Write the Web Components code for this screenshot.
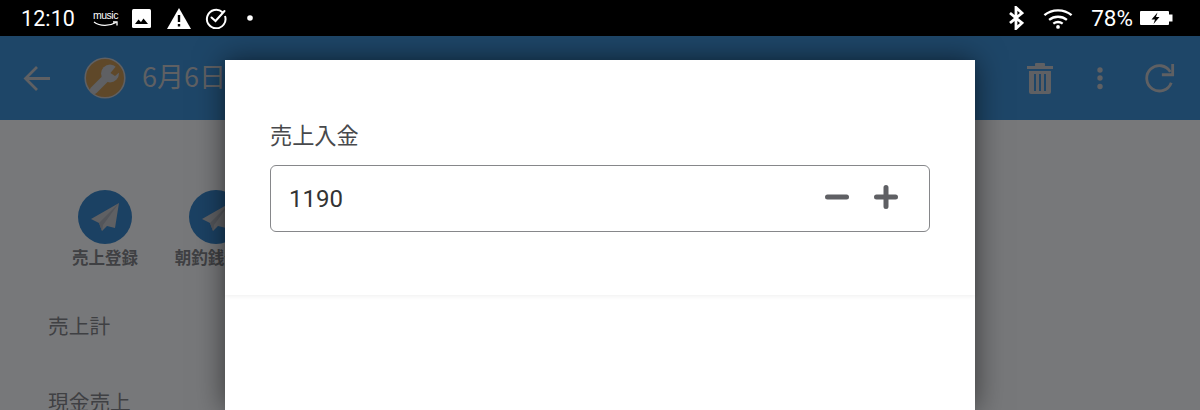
<!DOCTYPE html>
<html lang="ja">
<head>
<meta charset="utf-8">
<title>売上入金</title>
<style>
    html, body {
        margin: 0;
        width: 1200px;
        height: 410px;
        overflow: hidden;
        background: #77787a;
        font-family: "Noto Sans CJK JP", "Noto Sans", sans-serif;
    }
    body {
        display: flex;
        flex-direction: column;
        position: relative;
    }
</style>
</head>
<body>
<status-bar></status-bar>
<app-toolbar title="6月6日"></app-toolbar>
<sales-page>
    <quick-action>売上登録</quick-action>
    <quick-action>朝釣銭登録</quick-action>
</sales-page>
<amount-dialog label="売上入金" value="1190"></amount-dialog>

<script>
class StatusBar extends HTMLElement {
    constructor() {
        super();
        this.shadowDOM = this.attachShadow({mode:"open"});
    }

    connectedCallback() {
        this.shadowDOM.innerHTML = `
        <style>
            :host {
                display: flex;
                align-items: center;
                height: 36px;
                flex: none;
                background: #000;
                color: #fff;
                font-family: Roboto, sans-serif;
                font-size: 21.500px;
            }
            .left, .right { display: flex; align-items: center; }
            .left { padding-left: 21px; }
            .right { margin-left: auto; padding-right: 27px; }
            svg { display: block; flex: none; }
            .time { width: 72px; letter-spacing: .1px; }
            .music { position: relative; width: 26px; height: 24px; margin-right: 13px; }
            .music span {
                position: absolute;
                left: 0; top: 3px;
                font: 10.500px "Liberation Sans", sans-serif;
                letter-spacing: -.5px;
            }
            .music svg { position: absolute; left: 0; top: 0; }
            .level { font-size: 22.500px; margin-right: 7px; }
        </style>
        <div class="left">
            <span class="time">12:10</span>
            <div class="music">
                <span>music</span>
                <svg width="26" height="24" viewBox="0 0 26 24" fill="none" stroke="#fff" stroke-width="1.300">
                    <path d="M1 16C7 20.500 16 20.500 23 16.500"/>
                    <path d="M20 16h4v3.500"/>
                </svg>
            </div>
            <svg width="19" height="19" viewBox="0 0 19 19" style="margin-right:16px">
                <rect width="19" height="19" rx="1.500" fill="#fff"/>
                <path d="M3 15l3.500-4.500 2.500 2.500 2.500-3.500 4.500 5.500z" fill="#000"/>
            </svg>
            <svg width="24" height="21" viewBox="0 0 24 21" style="margin-right:14px">
                <path d="M12 0L24 21H0z" fill="#fff"/>
                <rect x="10.800" y="7" width="2.400" height="7" fill="#000"/>
                <rect x="10.800" y="16" width="2.400" height="2.500" fill="#000"/>
            </svg>
            <svg width="22" height="22" viewBox="0 0 22 22" fill="none" stroke="#fff" stroke-width="2" style="margin-right:20px">
                <path d="M17.500 5.200A9.300 9.300 0 1 0 20 9"/>
                <path d="M6.500 10.500l4 3.500 9-10" stroke-linecap="round"/>
            </svg>
            <svg width="6" height="6" viewBox="0 0 6 6"><circle cx="3" cy="3" r="2.800" fill="#fff"/></svg>
        </div>
        <div class="right">
            <svg width="16" height="24" viewBox="0 0 16 24" fill="none" stroke="#fff" stroke-width="2.800" style="margin-right:19px">
                <path d="M2 7l12 10-6 5.500V1.500L14 7 2 17"/>
            </svg>
            <svg width="30" height="21" viewBox="0 0 32 22" fill="none" stroke="#fff" stroke-width="2.500" style="margin-right:18px">
                <path d="M1.500 7.500C9.500 .5 22.500 .5 30.500 7.500"/>
                <path d="M6.500 12.500C12 8 20 8 25.500 12.500"/>
                <path d="M11 16.500C14 14.300 18 14.300 21 16.500"/>
                <circle cx="16" cy="20" r="2" fill="#fff" stroke="none"/>
            </svg>
            <span class="level">78%</span>
            <svg width="33" height="16" viewBox="0 0 33 16">
                <rect x="0" y="1" width="29" height="14" rx="1" fill="#fff"/>
                <rect x="29" y="4.500" width="3.500" height="7" fill="#fff"/>
                <path d="M17.500 2.500l-6 7h3.500l-1.500 4.500 6-7h-3.500z" fill="#000"/>
            </svg>
        </div>`;
    }
}

class AppToolbar extends HTMLElement {
    constructor() {
        super();
        this.shadowDOM = this.attachShadow({mode:"open"});
    }

    connectedCallback() {
        this.shadowDOM.innerHTML = `
        <style>
            :host {
                display: flex;
                align-items: center;
                height: 84px;
                flex: none;
                background: #1e4668;
                color: #5f6063;
                padding: 0 25px 0 23px;
                box-sizing: border-box;
                font-size: 27px;
            }
            svg { display: block; flex: none; }
            .title { margin: -5px 0 0 16px; white-space: nowrap; }
            .actions { margin-left: auto; display: flex; align-items: center; }
        </style>
        <svg width="27" height="27" viewBox="0 0 27 26" fill="none" stroke="#5f6063" stroke-width="2.800">
            <path d="M27 13H2.500M14 1.500L2.500 13 14 24.500"/>
        </svg>
        <svg width="42" height="42" viewBox="0 0 42 42" style="margin:0 0 0 34px">
            <circle cx="21" cy="21" r="19.800" fill="#5f4829" stroke="#5f6063" stroke-width="1.600"/>
            <path d="M10 33L23 20" stroke="#5f6063" stroke-width="8" stroke-linecap="round"/>
            <circle cx="26" cy="16.500" r="9" fill="#5f6063"/>
            <path d="M26.500 16L33 8l5 5-7 6z" fill="#5f4829"/>
        </svg>
        <span class="title">${this.getAttribute("title")}</span>
        <div class="actions">
            <svg width="26" height="31" viewBox="0 0 26 31" fill="#5f6063">
                <rect x="0" y="3" width="26" height="3"/>
                <rect x="8" y="0" width="10" height="3.500" rx="1"/>
                <path d="M2 8h22v21a2 2 0 0 1-2 2H4a2 2 0 0 1-2-2zM7 11v17h2V11zM12 11v17h2V11zM17 11v17h2V11z" fill-rule="evenodd"/>
            </svg>
            <svg width="6" height="26" viewBox="0 0 6 26" fill="#5f6063" style="margin-left:43.500px">
                <circle cx="3" cy="5" r="2.700"/>
                <circle cx="3" cy="13" r="2.700"/>
                <circle cx="3" cy="21.500" r="2.700"/>
            </svg>
            <svg width="30" height="30" viewBox="0 0 32 32" fill="none" stroke="#5f6063" stroke-width="3" style="margin-left:42.500px">
                <path d="M27 9.500A13.500 13.500 0 1 0 28 21"/>
                <path d="M29.500 1v11.500H18"/>
            </svg>
        </div>`;
    }
}

class SalesPage extends HTMLElement {
    constructor() {
        super();
        this.shadowDOM = this.attachShadow({mode:"open"});
    }

    connectedCallback() {
        this.shadowDOM.innerHTML = `
        <style>
            :host {
                display: block;
                flex: 1;
                min-height: 0;
                color: #3f4043;
                padding: 70px 0 0 48px;
                overflow: hidden;
            }
            .actions { display: flex; margin: 0 0 41px 1px; }
            .row {
                font-size: 20.700px;
                line-height: 30px;
                margin-bottom: 46px;
            }
        </style>
        <div class="actions"><slot></slot></div>
        <div class="row">売上計</div>
        <div class="row">現金売上</div>`;
    }
}

class QuickAction extends HTMLElement {
    constructor() {
        super();
        this.shadowDOM = this.attachShadow({mode:"open"});
    }

    connectedCallback() {
        this.shadowDOM.innerHTML = `
        <style>
            :host {
                display: flex;
                flex-direction: column;
                align-items: center;
                width: 111px;
                font-size: 16.500px;
                font-weight: 700;
                white-space: nowrap;
                color: #3f4043;
            }
            .circle {
                width: 54px;
                height: 54px;
                border-radius: 50%;
                background: #1b4163;
            }
            .circle svg { display: block; }
            .label { margin: 1px 0 0 1px; line-height: 24px; }
        </style>
        <div class="circle">
            <svg width="54" height="54" viewBox="0 0 54 54">
                <path d="M41 13L13 29l8 4 3 8 5-5 8 2z" fill="#5f6063"/>
                <path d="M41 13L21 33l3 8 1-6z" fill="#53555a"/>
            </svg>
        </div>
        <div class="label"><slot></slot></div>`;
    }
}

class AmountDialog extends HTMLElement {
    constructor() {
        super();
        this.shadowDOM = this.attachShadow({mode:"open"});
    }

    connectedCallback() {
        this.shadowDOM.innerHTML = `
        <style>
            :host {
                display: block;
                position: absolute;
                left: 225px;
                top: 60px;
                width: 750px;
                height: 350px;
                background: #fff;
                box-shadow: 0 0 28px rgba(0, 0, 0, .55);
            }
            .section {
                height: 235px;
                box-sizing: border-box;
                padding: 57px 45px 0;
                box-shadow: 0 1px 5px rgba(0, 0, 0, .07);
            }
            .label {
                font-size: 22.200px;
                line-height: 34px;
                color: #48494c;
                margin-bottom: 14px;
            }
            .field {
                display: flex;
                align-items: center;
                height: 67px;
                box-sizing: border-box;
                border: 1px solid #86878a;
                border-radius: 6px;
                padding: 0 31px 0 18px;
            }
            .value {
                font: 24px Roboto, sans-serif;
                color: #333;
                margin-right: auto;
            }
            svg { display: block; flex: none; margin-top: -4px; }
        </style>
        <div class="section">
            <div class="label">${this.getAttribute("label")}</div>
            <div class="field">
                <span class="value">${this.getAttribute("value")}</span>
                <svg width="24" height="24" viewBox="0 0 24 24" stroke="#5f6064" stroke-width="5" stroke-linecap="round">
                    <path d="M2.500 12h19"/>
                </svg>
                <svg width="24" height="24" viewBox="0 0 24 24" stroke="#5f6064" stroke-width="5" stroke-linecap="round" style="margin-left:25px">
                    <path d="M2.500 12h19M12 2.500v19"/>
                </svg>
            </div>
        </div>`;
    }
}

customElements.define("status-bar", StatusBar);
customElements.define("app-toolbar", AppToolbar);
customElements.define("sales-page", SalesPage);
customElements.define("quick-action", QuickAction);
customElements.define("amount-dialog", AmountDialog);
</script>
</body>
</html>
